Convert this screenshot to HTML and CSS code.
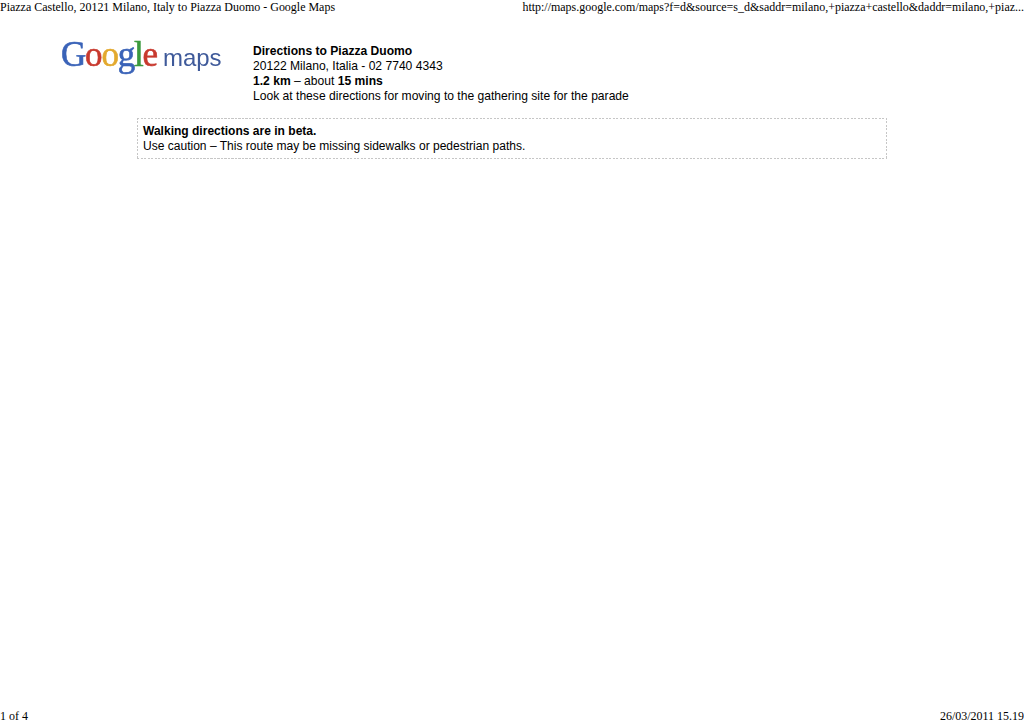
FILE: index.html
```html
<!DOCTYPE html>
<html lang="en">
<head>
<meta charset="utf-8">
<title>Piazza Castello, 20121 Milano, Italy to Piazza Duomo - Google Maps</title>
<link rel="stylesheet" href="styles.css">
</head>
<body>
<div class="page">
  <header class="print-head">
    <span>Piazza Castello, 20121 Milano, Italy to Piazza Duomo - Google Maps</span>
    <span>http://maps.google.com/maps?f=d&amp;source=s_d&amp;saddr=milano,+piazza+castello&amp;daddr=milano,+piaz...</span>
  </header>
  <main class="content">
    <section class="top">
      <div class="logo">
        <span class="google"><span class="blue">G</span><span class="red">o</span><span class="yellow">o</span><span class="blue">g</span><span class="green">l</span><span class="red">e</span></span>
        <span class="maps">maps</span>
      </div>
      <div class="summary">
        <div><b>Directions to Piazza Duomo</b></div>
        <div>20122 Milano, Italia - 02 7740 4343</div>
        <div><b>1.2 km</b> – about <b>15 mins</b></div>
        <div>Look at these directions for moving to the gathering site for the parade</div>
      </div>
    </section>
    <section class="warning">
      <div><b>Walking directions are in beta.</b></div>
      <div>Use caution – This route may be missing sidewalks or pedestrian paths.</div>
    </section>
  </main>
  <footer class="print-foot">
    <span>1 of 4</span>
    <span>26/03/2011 15.19</span>
  </footer>
</div>
</body>
</html>
```
FILE: styles.css
```css
html, body {
  margin: 0;
  padding: 0;
  background: #fff;
}
.page {
  width: 1024px;
  height: 724px;
  display: flex;
  flex-direction: column;
  overflow: hidden;
  color: #000;
}
.print-head, .print-foot {
  display: flex;
  justify-content: space-between;
  font-family: "Liberation Serif", serif;
  font-size: 11.97px;
  line-height: 14px;
  white-space: nowrap;
}
.print-foot {
  padding-bottom: 1px;
}
.content {
  flex: 1;
  padding: 30px 137px 0 61px;
  font-family: "Liberation Sans", sans-serif;
  font-size: 12px;
  line-height: 15px;
}
.top {
  display: flex;
}
.logo {
  width: 192px;
  height: 40px;
  box-sizing: border-box;
  padding-top: 1px;
  display: flex;
  align-items: baseline;
  white-space: nowrap;
  filter: blur(0.5px);
}
.google {
  font-family: "Liberation Serif", serif;
  font-size: 35px;
  line-height: 20px;
  letter-spacing: -1.2px;
  -webkit-text-stroke: 0.6px currentColor;
}
.maps {
  margin-left: 6px;
  font-family: "Liberation Sans", sans-serif;
  font-size: 24px;
  line-height: 20px;
  color: #3f5a9a;
}
.blue { color: #3a63b8; }
.red { color: #c8392e; }
.yellow { color: #e3a92e; }
.green { color: #3b9a3e; }
.summary {
  font-size: 12.1px;
}
.warning {
  margin: 14px 0 0 76px;
  height: 41px;
  box-sizing: border-box;
  padding: 6px 6px;
  font-size: 12.04px;
  background-image:
    repeating-linear-gradient(90deg, #c6c6c6 0, #c6c6c6 2px, transparent 2px, transparent 3.5px),
    repeating-linear-gradient(90deg, #c6c6c6 0, #c6c6c6 2px, transparent 2px, transparent 3.5px),
    repeating-linear-gradient(180deg, #c6c6c6 0, #c6c6c6 2px, transparent 2px, transparent 3.5px),
    repeating-linear-gradient(180deg, #c6c6c6 0, #c6c6c6 2px, transparent 2px, transparent 3.5px);
  background-repeat: no-repeat;
  background-size: 100% 1px, 100% 1px, 1px 100%, 1px 100%;
  background-position: left top, left bottom, left top, right top;
}
```
